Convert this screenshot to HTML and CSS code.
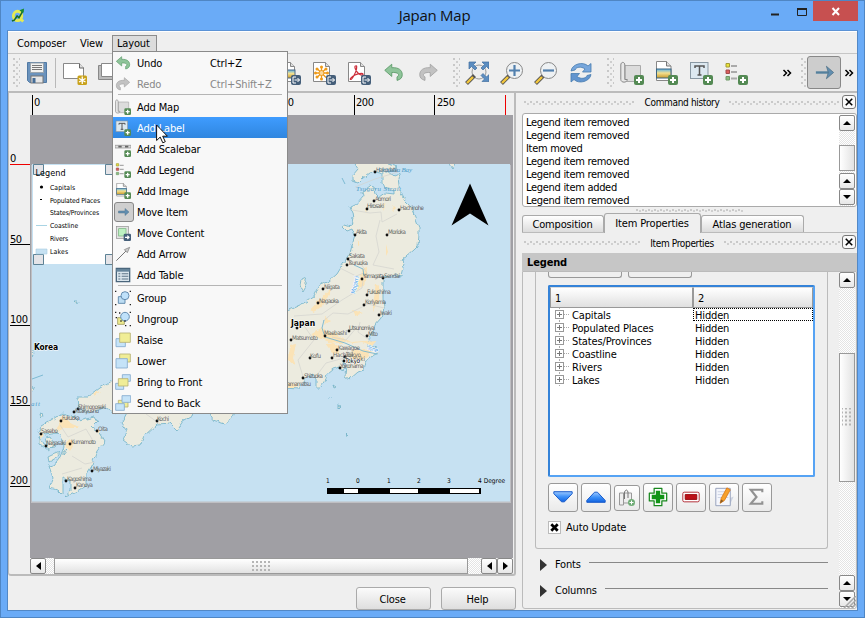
FILE: index.html
```html
<!DOCTYPE html>
<html lang="en">
<head>
<meta charset="utf-8">
<title>Japan Map</title>
<link rel="stylesheet" href="styles.css">
</head>
<body>
<svg class="defs" width="0" height="0">
<defs>
<filter id="rough" x="-5%" y="-5%" width="110%" height="110%"><feTurbulence type="fractalNoise" baseFrequency=".16" numOctaves="2" seed="4"/><feDisplacementMap in="SourceGraphic" scale="5" xChannelSelector="R" yChannelSelector="G"/></filter>
<linearGradient id="blue" x1="0" y1="0" x2="0" y2="1"><stop offset="0" stop-color="#9cc8ff"/><stop offset=".5" stop-color="#3c90f8"/><stop offset="1" stop-color="#1263e0"/></linearGradient>
<linearGradient id="sand" x1="0" y1="0" x2="0" y2="1"><stop offset="0" stop-color="#5cb4ea"/><stop offset=".45" stop-color="#f4e08e"/><stop offset="1" stop-color="#c79a2c"/></linearGradient>
<g id="plus"><rect x="14" y="14" width="10" height="10" rx="2" fill="#548a54"/><path d="M19 16v6M16 19h6" stroke="#fff" stroke-width="2"/></g>
<g id="out"><rect x="14" y="14" width="10" height="10" rx="2" fill="#455f7a"/><path d="M19 16h-3v6h3M17.500 19h5M20.500 17l2 2-2 2" stroke="#fff" fill="none"/></g>
<symbol id="save" viewBox="0 0 24 24"><path d="M2.500 1.500h19v20h-17l-2-2z" fill="#6b93bd" stroke="#527aa4"/><rect x="5.500" y="2" width="13" height="9.500" fill="#f2f2f0" stroke="#9aa5ae"/><path d="M7 4.500h10M7 6.500h10M7 8.500h10" stroke="#777"/><rect x="6" y="15" width="12" height="7" fill="#e6e6e6" stroke="#777"/><rect x="7.500" y="17" width="3" height="5" fill="#456c95"/></symbol>
<symbol id="new" viewBox="0 0 24 24"><path d="M.5 2.500h16l4 4.500v10.500h-20z" fill="#fff" stroke="#888"/><path d="M16.500 2.500v4.500h4.500" fill="#ddd" stroke="#666"/><rect x="14.500" y="14.500" width="9.500" height="9.500" rx="1.500" fill="#c9a21a"/><path d="M19.250 15.500v7.500M16 17.500l6.500 3.500M22.500 17.500l-6.500 3.500" stroke="#fff" stroke-width="1.300"/></symbol>
<symbol id="dup" viewBox="0 0 24 24"><path d="M.5 4.500h18v14h-18z" fill="#bbb" stroke="#888"/><path d="M3.500 2.500h18v13h-18z" fill="#fff" stroke="#888"/></symbol>
<symbol id="expimg" viewBox="0 0 24 24"><path d="M1.500 1.500h12l4 4v15h-16z" fill="#fff" stroke="#888"/><path d="M13.500 1.500v4h4" fill="#ddd" stroke="#888"/><rect x="4" y="9" width="14" height="8" fill="url(#sand)" stroke="#4b6784"/><use href="#out"/></symbol>
<symbol id="expsvg" viewBox="0 0 24 24"><path d="M1.500 1.500h12l4 4v15h-16z" fill="#fff" stroke="#888"/><path d="M13.500 1.500v4h4" fill="#ddd" stroke="#888"/><path d="M9.500 5.500v13M3 12h13M5 7.500l9 9M14 7.500l-9 9" stroke="#ee9a19" stroke-width="1.300"/><circle cx="9.500" cy="12" r="2.500" fill="#fbd79b" stroke="#ee9a19"/><g fill="#ee9a19"><circle cx="9.500" cy="6" r="1.500"/><circle cx="9.500" cy="18" r="1.500"/><circle cx="3.500" cy="12" r="1.500"/><circle cx="15.500" cy="12" r="1.500"/><circle cx="5" cy="8" r="1.500"/><circle cx="14" cy="8" r="1.500"/><circle cx="5" cy="16" r="1.500"/></g><use href="#out"/></symbol>
<symbol id="exppdf" viewBox="0 0 24 24"><path d="M1.500 1.500h12l4 4v15h-16z" fill="#fff" stroke="#888"/><path d="M13.500 1.500v4h4" fill="#ddd" stroke="#888"/><path d="M8.500 5c-1.500 0 0 5 3 7.500s5 1.500 4.500.5-5-.5-8 1-5.500 4-4.500 4.500S9 12 9.500 8 9.500 5 8.500 5z" fill="none" stroke="#cc2e3a" stroke-width="1.200"/><use href="#out"/></symbol>
<symbol id="undo" viewBox="0 0 24 24"><path d="M2 9.500l8-7v4c8-.5 12 3 12 8 0 3.500-2 5.500-6 6.500v-4c3-1.500 3-5.500-6-5v4.500z" fill="#8fc49a" stroke="#5b9a68"/></symbol>
<symbol id="redo" viewBox="0 0 24 24"><path d="M22 9.500l-8-7v4C6 6 2 9.500 2 14.500c0 3.500 2 5.500 6 6.500v-4c-3-1.500-3-5.500 6-5v4.500z" fill="#c2c2c2" stroke="#a4a4a4"/></symbol>
<g id="lens"><path d="M1.500 22.500l8-8" stroke="#555" stroke-width="4"/><path d="M2 22l6-6" stroke="#f3c73c" stroke-width="2.400"/></g>
<symbol id="full" viewBox="0 0 24 24"><circle cx="14" cy="11" r="7" fill="#eee" stroke="#999"/><use href="#lens"/><g fill="#5c8dc0" stroke="#416f9f" stroke-width=".7"><path d="M4 1h7L8.500 3.500 12 7 10 9 6.500 5.500 4 8z"/><path d="M24 1h-7l2.500 2.500L16 7l2 2 3.500-3.500L24 8z"/><path d="M24 20.500h-7l2.500-2.500-3.500-3.500 2-2 3.500 3.500 2.500-2.500z"/></g></symbol>
<symbol id="zin" viewBox="0 0 24 24"><use href="#lens"/><circle cx="14.500" cy="9.500" r="8" fill="#eef1f3" stroke="#888"/><path d="M14.500 4v11M9 9.500h11" stroke="#5280ae" stroke-width="2.200"/></symbol>
<symbol id="zout" viewBox="0 0 24 24"><use href="#lens"/><circle cx="14.500" cy="9.500" r="8" fill="#eef1f3" stroke="#888"/><path d="M9 9.500h11" stroke="#5280ae" stroke-width="2.200"/></symbol>
<symbol id="refresh" viewBox="0 0 24 24"><path d="M2 10C3 3 14 0 19 5l3-2.500V11h-8.500l2.500-3C12 5 7 6 6 9z" fill="#78a7dc" stroke="#477caf" stroke-width=".8"/><path d="M22 13.500c-1 7-12 10-17 5L2 21v-8.500h8.500L8 15.500c4 3 9 2 10-1z" fill="#6295cf" stroke="#477caf" stroke-width=".8"/></symbol>
<symbol id="map" viewBox="0 0 24 24"><path d="M5 4.500h15.500v16H5z" fill="#dcdcdc" stroke="#aaa"/><path d="M.8 4c0-3.500 4-3.500 4 0v14.500h2.500c0 3.500-6.500 3.500-6.500 0z" fill="#e8e8e8" stroke="#888"/><use href="#plus"/></symbol>
<symbol id="image" viewBox="0 0 24 24"><path d="M2.500.5h10l4.500 4.500v14.500h-14.500z" fill="#fff" stroke="#888"/><path d="M12.500.5v4.500h4.500" fill="#ddd" stroke="#777"/><rect x="2.500" y="8" width="14.500" height="9" fill="url(#sand)" stroke="#3c6480"/><use href="#plus"/></symbol>
<symbol id="label" viewBox="0 0 24 24"><rect x="1.500" y="1.500" width="17.500" height="16" fill="#dce8f0" stroke="#8998a3"/><path d="M6 7V5h9v2M10.500 5v9M8.500 14h4" fill="none" stroke="#555" stroke-width="1.500"/><use href="#plus"/></symbol>
<symbol id="legend" viewBox="0 0 24 24"><path d="M2 2.500h3.500V6H2z" fill="#e8e33a" stroke="#a49a34"/><path d="M2 9h3.500v3.500H2z" fill="#dc5d5d" stroke="#a24c4c"/><path d="M2 15.500h3.500V19H2z" fill="#8bbd80" stroke="#709a69"/><path d="M7 5h6M7 11h6M7 17.500h6" stroke="#aaa" stroke-width="2"/><use href="#plus"/></symbol>
<symbol id="scalebar" viewBox="0 0 24 24"><path d="M0 6.500h24v4H0z" fill="#ddd" stroke="#888"/><path d="M5 8.500h5M15 8.500h5" stroke="#666" stroke-width="2.500"/><use href="#plus"/></symbol>
<symbol id="move" viewBox="0 0 24 24"><path d="M1 10h13V5l8 7-8 7v-5H1z" fill="#628eb0" stroke="#54768d"/></symbol>
<symbol id="content" viewBox="0 0 24 24"><rect x="2" y="2" width="18" height="18" fill="#e3e3e3" stroke="#8f8f8f"/><rect x="5.500" y="5.500" width="11" height="11" fill="#bdf1c2" stroke="#72b179"/><rect x="13" y="13" width="11" height="11" rx="2" fill="#455f7a"/><path d="M15 18.500h6M18.500 16l2.500 2.500-2.500 2.500" fill="none" stroke="#fff" stroke-width="1.800"/></symbol>
<symbol id="arrow" viewBox="0 0 24 24"><path d="M2 22L18 6" stroke="#777" stroke-width="1.500"/><path d="M22 2l-3.500 8-4.500-4.500z" fill="#ccc" stroke="#777"/></symbol>
<symbol id="table" viewBox="0 0 24 24"><path d="M2 2h20v20H2z" fill="#dbe6ed" stroke="#4a667c" stroke-width="2"/><path d="M2 5h20" stroke="#66859b" stroke-width="4"/><path d="M5 10h3M10 10h10M5 14h3M10 14h10M5 18h3M10 18h10" stroke="#5d7487" stroke-width="1.600"/></symbol>
<g id="corners" fill="#222"><path d="M0 1h2v2H0zM22 1h2v2h-2zM0 21h2v2H0zM22 21h2v2h-2z"/></g>
<symbol id="group" viewBox="0 0 24 24"><path d="M5 10h10v10H5z" fill="#bdddf3" stroke="#5e87aa" stroke-width="1.400"/><circle cx="15" cy="8.500" r="6" fill="#bfe1fa" stroke="#5e87aa" stroke-width="1.400"/><use href="#corners"/></symbol>
<symbol id="ungroup" viewBox="0 0 24 24"><path d="M4 10h10v10H4z" fill="#eeeb8d" stroke="#aaa56b" stroke-width="1.400"/><circle cx="15" cy="8.500" r="6.500" fill="#bfe1fa" stroke="#5e87aa" stroke-width="1.400"/><use href="#corners"/><path d="M8 14h2v2H8zM14 14h2v2h-2zM6 2h2v2H6zM1 9h2v2H1zM15 21h2v2h-2z" fill="#222"/></symbol>
<symbol id="raise" viewBox="0 0 24 24"><path d="M1.500 10h14v12h-14z" fill="#c5e3f8" stroke="#87add0" stroke-width="1.300"/><path d="M7 1.500h16v14H7z" fill="#f0ed96" stroke="#b8b476" stroke-width="1.300"/></symbol>
<symbol id="lower" viewBox="0 0 24 24"><path d="M7 1.500h16v12H7z" fill="#f0ed96" stroke="#b8b476" stroke-width="1.300"/><path d="M1.500 8.500h17v14h-17z" fill="#c5e3f8" stroke="#87add0" stroke-width="1.300"/></symbol>
<symbol id="front" viewBox="0 0 24 24"><path d="M11 1h12v10H11zM1 14h12v9H1z" fill="#c5e3f8" stroke="#87add0" stroke-width="1.300"/><path d="M5 7h14.500v11H5z" fill="#f0ed96" stroke="#b8b476" stroke-width="1.300"/></symbol>
<symbol id="back" viewBox="0 0 24 24"><path d="M5 8h14.500v10H5z" fill="#f0ed96" stroke="#b8b476" stroke-width="1.300"/><path d="M10.500 1h13v10h-13zM1 13h13v10H1z" fill="#c5e3f8" stroke="#87add0" stroke-width="1.300"/></symbol>
</defs>
</svg>

<div class="window">
  <header class="titlebar">
    <svg class="logo" viewBox="0 0 16 16"><ellipse cx="7" cy="9" rx="4.500" ry="5" fill="none" stroke="#e4ea54" stroke-width="3"/><path d="M8 10l5 5" stroke="#e4ea54" stroke-width="3"/><path d="M1 14.500l2.500-1 3-4.500 2 2L13 3" fill="none" stroke="#186b2a" stroke-width="1.700"/><path d="M9 3l5-2-1 5z" fill="#168a30"/></svg>
    <h1>Japan Map</h1>
    <div class="controls"><svg viewBox="0 0 45 20"><path d="M10 13.500h8" stroke="#222" stroke-width="2"/><path d="M36.500 7.500h9v7h-9z" fill="none" stroke="#222"/><path d="M36 8h10" stroke="#222" stroke-width="2"/></svg><span class="shut"><svg viewBox="0 0 45 20"><path d="M19.500 7l6.500 7M26 7l-6.500 7" stroke="#fff" stroke-width="2"/></svg></span></div>
  </header>

  <div class="client">
    <nav class="menubar"><span>Composer</span><span>View</span><span class="open">Layout</span></nav>
    <div class="toolbar">
      <i class="grip g1"></i>
      <b><svg><use href="#save"/></svg></b><i class="tsep"></i>
      <b><svg><use href="#new"/></svg></b><b><svg><use href="#dup"/></svg></b>
      <i class="covered"></i>
      <b><svg><use href="#expimg"/></svg></b><b><svg><use href="#expsvg"/></svg></b><b><svg><use href="#exppdf"/></svg></b><b><svg class="mid"><use href="#undo"/></svg></b><b><svg class="mid"><use href="#redo"/></svg></b>
      <i class="grip g2"></i>
      <b><svg><use href="#full"/></svg></b><b><svg><use href="#zin"/></svg></b><b><svg><use href="#zout"/></svg></b><b><svg><use href="#refresh"/></svg></b>
      <i class="grip g3"></i>
      <b><svg><use href="#map"/></svg></b><b><svg><use href="#image"/></svg></b><b><svg><use href="#label"/></svg></b><b><svg><use href="#legend"/></svg></b>
      <svg class="more m1" viewBox="0 0 10 8"><path d="M1.500 1l3 3-3 3M5.500 1l3 3-3 3" fill="none" stroke="#000" stroke-width="1.500"/></svg>
      <i class="grip g4"></i>
      <span class="pressed"><svg viewBox="0 0 24 24"><path d="M3 12h16" stroke="#54809d" stroke-width="2.500"/><path d="M14 5.500l7.500 6.500-7.500 6.500 2-6.500z" fill="#628eb0" stroke="#4f7085" stroke-width=".8"/></svg></span>
      <svg class="more" viewBox="0 0 10 8"><path d="M1.500 1l3 3-3 3M5.500 1l3 3-3 3" fill="none" stroke="#000" stroke-width="1.500"/></svg>
    </div>

    <div class="work">
      <main class="left">
        <div class="view">
          <svg class="canvas" viewBox="10 95 503 463">
            <path d="M30 115h483v443H30z" fill="#a09fa4"/>
            <g class="ruler"><path d="M32.500 95v20M113.500 95v20M193.500 95v20M274.500 95v20M354.500 95v20M434.500 95v20M10 244.500h20M10 325.500h20M10 405.500h20M10 486.500h20" stroke="#000"/><path d="M505.500 95v20M10 164.500h20" stroke="#e00"/>
            <text x="34" y="106">0</text><text x="276" y="106" textLength="18">150</text><text x="356" y="106" textLength="18">200</text><text x="437" y="106" textLength="18">250</text><text x="10" y="162">0</text><text x="10" y="243" textLength="12">50</text><text x="10" y="323" textLength="18">100</text><text x="10" y="404" textLength="18">150</text><text x="10" y="484" textLength="18">200</text></g>
            <path d="M31 165h480v338H31z" fill="#bfbfc3"/>
            <path d="M32 164h478v337.500H32z" fill="#c6e1f2"/>
            <svg x="32" y="164" width="478" height="337" viewBox="32 164 478 337">
            <g class="land" filter="url(#rough)">
              <path d="M362 192l1 5-5 6-8 4 2 5 1 7-2 7-6-2-2 3 4 4 5-2 3 7-3 9-2 9-5 7-8 13-9 8-8 3-6 12-12 7-11 5-10 4L250 350 150 370 112 381 100 388 88 397l-11 0 1 11 12 5 13-6 10 6 170 -25 16 1 3-6 4-5 7-4 3 5 0 9 4 0 5-6 2-8 6-5 7-2 3 4 2-4-3-6 5 3-1 12 4 3 8-7 6-2 2-9 6-5 6-3-1-4-9-3 0-6 5-7 2-8 6-7 3-10-1-10 0-13 0-8 7-1 7-1 4 1 3-11-2-5 5-4 7-6 4-4 1-11 0-7-4-11-5-12-5-5-5-8-2-14 3-5-7 3-7-6-5 4 0 8 2 5 10 3 0 4-8-1-7 5-4-4-1-7-4-1z"/>
              <path d="M350 155l8 14-5 6 0 6 5 2 5-5 7-5 5-1 8 2 7-3 8-4-7-2-4-1-7-8z"/><path d="M446 160l6 8 4-7z"/>
              <path d="M62 413l-12 8-9 5-3 6 8 3 11-2 5 7 2 7-4 10-6 8-5 1 4 12-4 10 9 2 5 5 0-9 0-8 7 3 0 10-5 6 10-4 11-7 0-12 6-10 5-13 7-9-6-10-6-5 5-5-3-5-16 4-5-5-9-2z"/>
              <path d="M40 436l0 8 8 6 7-5-5-8-4 1 2 7-4-1zM52 455l8-3-4 6-7 4-1-5zM63 452l4-2-4 5z"/>
              <path d="M130 408l-8 15 5 7-4 10 8 6 9-1 4-9 13-12 13-1 7 7 6-9 9-5 3-8zM206 408l7 12 12 4 6-5 4-11zM40 414l3 1-2 3z"/>
              <path d="M333 385l3 2-2 1zM338 405l2 1-2 2zM346 434l2 2-1 1zM331 396l-1 2zM301 280l4-2 0 4 3 0-5 9-2-3-1-3z"/>
              <path d="M74 301l3 0-1 2zM28 345l6 8-2 4zM28 385l6 3-2 4z"/>
            </g>
            <g class="city" filter="url(#rough)"><path d="M377 340l-8 10-14-1-6 9 6 7 6-5 8-4 3-10-10-4-9 1-19-10-13-4-10 6 15 6 12 5 2 8-8-2-6-8zM363 268l3-1 0 12-5 9-4 2zM376 283l3 4 0 12-5 10-2 3zM328 290l3-1-9 19-8 4-4-2zM62 415l10 9 10 4-17 0-9 4zM70 439l4 4-4 8-6-7zM290 345l6-1-3 14 3 8-7-6zM285 384l12-1-1 5-11 0zM384 203l2 5-2 4zM392 205l4 4-3 3zM366 205l2 2-2 7zM357 240l2 3-2 4zM386 244l2 8-2 4zM96 429l4 1-1 4zM39 432l5 2-2 5zM353 310l10 3-8 3zM325 317l5 3-6 5zM92 394l8-3-5 6z"/></g>
            </svg>
            <g fill="none" stroke="#d2d2ce" stroke-width=".7"><path d="M352 210l18 3 11-1 1 10 15-8M380 220l-4 16 3 16-6 13 21 4M340 268l16 8 8-3-2 15-20 12-20 14-28 2M347 261l14 3 8 12M384 308l-16-4-20 10-15-1-10 8M376 330l-18-4-12 14-14-3M372 342l-14-10 2-10M300 320l14 20-16 20 6 20M350 345l-6 13-18 5-9 12M60 425l8 12 18-8 6 10M72 456l13 8 10-2M62 474l20-6M160 424l-14-10M355 187l20-8 23-7"/></g>
            <path d="M354 265l9 4 1 7M324 320l-2 8 3 9 20 6 18 8 14 3M345 184l-3-6M32 379l11-4" fill="none" stroke="#75b6cf" stroke-width=".9"/>
            <g fill="#111"><circle cx="375" cy="172" r="1.400"/><circle cx="374" cy="201" r="1.400"/><circle cx="367" cy="209" r="1.400"/><circle cx="399" cy="210" r="1.400"/><circle cx="355" cy="235" r="1.400"/><circle cx="387" cy="235" r="1.400"/><circle cx="348" cy="259" r="1.400"/><circle cx="347" cy="265" r="1.400"/><circle cx="362" cy="279" r="1.400"/><circle cx="383" cy="278" r="1.400"/><circle cx="367" cy="295" r="1.400"/><circle cx="364" cy="305" r="1.400"/><circle cx="323" cy="289" r="1.400"/><circle cx="318" cy="303" r="1.400"/><circle cx="379" cy="315" r="1.400"/><circle cx="349" cy="331" r="1.400"/><circle cx="325" cy="336" r="1.400"/><circle cx="367" cy="336" r="1.400"/><circle cx="291" cy="340" r="1.400"/><circle cx="297" cy="328" r="1.400"/><circle cx="337" cy="350" r="1.400"/><circle cx="310" cy="358" r="1.400"/><circle cx="332" cy="358" r="1.400"/><circle cx="345" cy="357" r="1.700"/><circle cx="344" cy="361" r="1.400"/><circle cx="340" cy="368" r="1.400"/><circle cx="303" cy="378" r="1.400"/><circle cx="78" cy="409" r="1.400"/><circle cx="74" cy="412" r="1.400"/><circle cx="61" cy="421" r="1.400"/><circle cx="41" cy="434" r="1.400"/><circle cx="46" cy="446" r="1.400"/><circle cx="70" cy="444" r="1.400"/><circle cx="97" cy="431" r="1.400"/><circle cx="92" cy="471" r="1.400"/><circle cx="66" cy="481" r="1.400"/><circle cx="75" cy="488" r="1.400"/><circle cx="157" cy="421" r="1.400"/></g>
            <g class="places"><text x="376" y="172" textLength="22">Hakodate</text><text x="375" y="201" textLength="16">Aomori</text><text x="367" y="208" textLength="17">Hirosaki</text><text x="400" y="210" textLength="24">Hachinohe</text><text x="356" y="234" textLength="11">Akita</text><text x="388" y="234" textLength="18">Morioka</text><text x="349" y="258" textLength="16">Sakata</text><text x="348" y="265" textLength="20">Tsuruoka</text><text x="363" y="278" textLength="21">Yamagata</text><text x="384" y="278" textLength="16">Sendai</text><text x="367" y="294" textLength="24">Fukushima</text><text x="365" y="304" textLength="21">Koriyama</text><text x="324" y="289" textLength="16">Niigata</text><text x="319" y="303" textLength="20">Nagaoka</text><text x="380" y="315" textLength="12">Iwaki</text><text x="349" y="330" textLength="26">Utsunomiya</text><text x="324" y="335" textLength="23">Maebashi</text><text x="368" y="336" textLength="10">Mito</text><text x="292" y="340" textLength="26">Matsumoto</text><text x="338" y="350" textLength="22">Kawagoe</text><text x="310" y="358" textLength="11">Kofu</text><text x="333" y="357" textLength="20">Hachioji</text><text x="346" y="357" textLength="15">Tokyo</text><text x="353" y="361" textLength="12">Suki</text><text x="340" y="368" textLength="24">Yokohama</text><text x="304" y="378" textLength="19">Shizuoka</text><text x="284" y="386" textLength="27">Hamamatsu</text><text x="78" y="409" textLength="28">Shimonoseki</text><text x="75" y="413" textLength="24">Kitakyushu</text><text x="62" y="420" textLength="18">Fukuoka</text><text x="41" y="433" textLength="17">Sasebo</text><text x="46" y="445" textLength="20">Nagasaki</text><text x="71" y="444" textLength="25">Kumamoto</text><text x="98" y="431" textLength="10">Oita</text><text x="93" y="471" textLength="18">Miyazaki</text><text x="67" y="481" textLength="25">Kagoshima</text><text x="76" y="487" textLength="17">Kanoya</text><text x="157" y="421" textLength="12">Kochi</text></g>
            <g class="water"><text x="378" y="172" textLength="34">Uchiura Bay</text><text x="356" y="191" textLength="45">Tsugaru Strait</text><text x="31" y="406" textLength="9">ait</text><text class="river" x="355" y="294" transform="rotate(-77 355 294)" textLength="18">Mogami</text><text class="river" x="367" y="349" transform="rotate(20 367 349)" textLength="11">Tone</text></g>
            <g class="country"><text x="291" y="326" textLength="24">Japan</text><text x="34" y="350" textLength="24">Korea</text></g><text class="tokyo" x="345" y="363" textLength="15">Tokyo</text>
            <path d="M470 183.500l18.500 42-18.500-12-18.500 12z"/>
            <g class="scale"><path d="M327 488h154v6H327z"/><path d="M344 489h14v4h-14zM390 489h28v4h-28zM450 489h29v4h-29z" fill="#fff"/><text x="326" y="483">1</text><text x="356" y="483">0</text><text x="387" y="483">1</text><text x="417" y="483">2</text><text x="447" y="483">3</text><text x="478" y="483" textLength="27">4 Degree</text></g>
            <path d="M33 165h86v99H33z" fill="#fff"/>
            <g fill="#e4e4e8" stroke="#5d8296"><path d="M33.500 164.500h10v10h-10zM105.500 164.500h10v10h-10zM33.500 254.500h10v10h-10zM105.500 254.500h10v10h-10z"/></g>
            <g class="maplegend"><text class="head" x="35.500" y="176" textLength="30">Legend</text><text x="50" y="190" textLength="25">Capitals</text><text x="50" y="203" textLength="50">Populated Places</text><text x="50" y="215" textLength="49">States/Provinces</text><text x="50" y="228" textLength="28">Coastline</text><text x="50" y="241" textLength="18">Rivers</text><text x="50" y="254" textLength="18">Lakes</text><circle cx="41.500" cy="187" r="1.600"/><path d="M40 199h2v1h-2z"/><path d="M36 225.500h11" stroke="#a9d4e4"/><path d="M36 249h11v5H36z" fill="#c6e1f2" stroke="#a9cde0" stroke-width=".6"/></g>
          </svg>
          <div class="hscroll"><span class="sb"><i class="al"></i></span><div class="hthumb"><i></i></div><span class="sb end"><i class="al"></i></span><span class="sb"><i class="ar"></i></span></div>
        </div>
        <footer><button>Close</button><button>Help</button></footer>
      </main>

      <aside class="right">
        <div class="docktitle"><i></i><span>Command history</span><i></i><em><svg viewBox="0 0 13 13"><path d="M3 3l7 7M10 3l-7 7" stroke="#000" stroke-width="1.700"/></svg></em></div>
        <div class="history">
          <ul><li>Legend item removed</li><li>Legend item removed</li><li>Item moved</li><li>Legend item removed</li><li>Legend item removed</li><li>Legend item added</li><li>Legend item removed</li></ul>
          <div class="vscroll"><span class="sb"><i class="au"></i></span><div class="vthumb h1"></div><span class="sb"><i class="au"></i></span><span class="sb"><i class="ad"></i></span></div>
        </div>
        <div class="split"></div>
        <div class="tabs"><span>Composition</span><span class="on">Item Properties</span><span>Atlas generation</span></div>
        <div class="docktitle second"><i></i><span>Item Properties</span><i></i><em><svg viewBox="0 0 13 13"><path d="M3 3l7 7M10 3l-7 7" stroke="#000" stroke-width="1.700"/></svg></em></div>
        <h2>Legend</h2>
        <div class="props">
          <div class="form">
            <section>
              <div class="cut"><i></i><i></i></div>
              <div class="tree">
                <div class="thead"><span>1</span><span>2</span></div>
                <div class="row"><span>Capitals</span><span class="focus">Hidden</span></div>
                <div class="row"><span>Populated Places</span><span>Hidden</span></div>
                <div class="row"><span>States/Provinces</span><span>Hidden</span></div>
                <div class="row"><span>Coastline</span><span>Hidden</span></div>
                <div class="row"><span>Rivers</span><span>Hidden</span></div>
                <div class="row"><span>Lakes</span><span>Hidden</span></div>
              </div>
              <div class="actions">
                <span><svg viewBox="0 0 28 28"><path d="M4.500 8h19v2l-8 8.500h-3L4.500 10z" fill="url(#blue)" stroke="#1457c8"/></svg></span>
                <span><svg viewBox="0 0 28 28"><path d="M4.500 19h19v-2l-8-8.500h-3L4.500 17z" fill="url(#blue)" stroke="#1457c8"/></svg></span>
                <span class="small"><svg viewBox="0 0 24 24"><path d="M4.500 7v12h4V7zM8.500 7h8v10h-8z" fill="#eee" stroke="#999"/><path d="M9.500 13V6q2-4 3.500 0v6" fill="none" stroke="#777"/><circle cx="16.500" cy="16.500" r="3.500" fill="#6fac76"/><path d="M16.500 14.500v4M14.500 16.500h4" stroke="#fff"/></svg></span>
                <span><svg viewBox="0 0 28 28"><path d="M10 4.500h8v5h5v8h-5v5h-8v-5H5v-8h5z" fill="#fff" stroke="#18881d" stroke-width="1.300" stroke-linejoin="round"/><path d="M14 7v13M7.500 13.500h13" stroke="#129417" stroke-width="4.500"/></svg></span>
                <span><svg viewBox="0 0 28 28"><rect x="5.500" y="8.500" width="17" height="10" rx="1.500" fill="#fff" stroke="#b12b34"/><path d="M8 11h12v5H8z" fill="#bd1119" stroke="#98080d"/></svg></span>
                <span><svg viewBox="0 0 28 28"><path d="M17 16l7-3-4 9h-6z" fill="#cdd3df"/><path d="M5.500 4.500h15v18h-15z" fill="#f4f6fc" stroke="#96a0bb"/><path d="M7.500 8h11M7.500 11h11M7.500 14h11" stroke="#ccd3e4"/><path d="M10 20l1-5 6-11 3.500 2-6 11z" fill="#f6a12c" stroke="#d87310" stroke-width=".8"/><path d="M10 20l1-4 2.500 1.500z" fill="#865d27"/></svg></span>
                <span><svg viewBox="0 0 28 28"><path d="M19.500 8.500V6h-12l6 7.500-6 7h12V18" fill="none" stroke="#929292" stroke-width="2.200"/></svg></span>
              </div>
              <label class="check"><i><svg viewBox="0 0 12 12"><path d="M2.500 2.500l7 7M9.500 2.500l-7 7" stroke="#000" stroke-width="3"/></svg></i>Auto Update</label>
            </section>
            <div class="fold">Fonts</div>
            <div class="fold two">Columns</div>
          </div>
          <div class="vscroll big"><span class="sb"><i class="au"></i></span><div class="vthumb h2"></div><span class="sb push"><i class="au"></i></span><span class="sb"><i class="ad"></i></span><svg class="resize" viewBox="0 0 12 12"><path d="M0 12L12 0M4 12l8-8M8 12l4-4" stroke="#aaa" stroke-width="1.500"/></svg></div>
        </div>
      </aside>
    </div>
  </div>

  <div class="menu">
    <div class="item"><svg><use href="#undo"/></svg><span>Undo</span><kbd>Ctrl+Z</kbd></div>
    <div class="item off"><svg><use href="#redo"/></svg><span>Redo</span><kbd>Ctrl+Shift+Z</kbd></div>
    <hr>
    <div class="item"><svg><use href="#map"/></svg><span>Add Map</span></div>
    <div class="item hot"><svg><use href="#label"/></svg><span>Add Label</span></div>
    <div class="item"><svg><use href="#scalebar"/></svg><span>Add Scalebar</span></div>
    <div class="item"><svg><use href="#legend"/></svg><span>Add Legend</span></div>
    <div class="item"><svg><use href="#image"/></svg><span>Add Image</span></div>
    <div class="item checked"><svg><use href="#move"/></svg><span>Move Item</span></div>
    <div class="item"><svg><use href="#content"/></svg><span>Move Content</span></div>
    <div class="item"><svg><use href="#arrow"/></svg><span>Add Arrow</span></div>
    <div class="item"><svg><use href="#table"/></svg><span>Add Table</span></div>
    <hr>
    <div class="item"><svg><use href="#group"/></svg><span>Group</span></div>
    <div class="item"><svg><use href="#ungroup"/></svg><span>Ungroup</span></div>
    <div class="item"><svg><use href="#raise"/></svg><span>Raise</span></div>
    <div class="item"><svg><use href="#lower"/></svg><span>Lower</span></div>
    <div class="item"><svg><use href="#front"/></svg><span>Bring to Front</span></div>
    <div class="item"><svg><use href="#back"/></svg><span>Send to Back</span></div>
  </div>
  <svg class="cursor" viewBox="0 0 12 20"><path d="M.6 1v15.500l3.600-3.400 2.600 5.700 2.500-1.100-2.600-5.500h4.700z" fill="#fff" stroke="#111"/></svg>
</div>
</body>
</html>
```
FILE: styles.css
```css
* { box-sizing: border-box; }
body { margin: 0; font: 11px/13px "DejaVu Sans Condensed", "DejaVu Sans", sans-serif; font-stretch: condensed; color: #000; overflow: hidden; letter-spacing: -0.15px; }
.defs { position: absolute; }
i, em { font-style: normal; display: block; }
h1, h2, ul { margin: 0; padding: 0; font: inherit; list-style: none; }
.window { position: relative; width: 865px; height: 618px; background: #6aabf7; border: 1px solid #4f86c4; padding: 0 6px 6px; }
.titlebar { height: 29px; display: flex; align-items: flex-start; margin-right: -6px; }
.logo { width: 15px; height: 16px; margin: 6px 0 0 4px; }
.titlebar h1 { flex: 1; font: 15px/28px "Open Sans", "Noto Sans", sans-serif; text-align: center; padding-left: 82px; letter-spacing: -0.25px; color: #111; }
.controls { display: flex; padding-right: 6px; }
.controls svg { width: 45px; height: 20px; display: block; overflow: visible; }
.controls > svg { margin-right: 7px; }
.shut { background: #c75050; width: 45px; height: 20px; }
.client { height: 581px; border: 1px solid #5288c6; background: #efefef; border-top-color: #5b93d6; }
.menubar { height: 23px; display: flex; border-bottom: 1px solid #c6c6c6; border-top: 1px solid #fff; padding: 3px 0 0 4px; }
.menubar span { height: 18px; line-height: 17px; padding: 0 5px; margin-right: 4px; }
.menubar .open { border: 1px solid #8c8c8c; background: #dcdcdc; line-height: 15px; padding: 0 4px; width: 45px; }
.toolbar { height: 39px; display: flex; align-items: center; border-bottom: 2px solid #bbb; padding-left: 5px; }
.toolbar b { flex: none; width: 34.7px; height: 34px; display: flex; align-items: center; justify-content: center; }
.toolbar b svg { width: 24px; height: 24px; }
.toolbar b svg.mid { width: 21px; height: 21px; }
.grip { flex: none; width: 7px; height: 29px; background: radial-gradient(circle at 1px 1px, #c8c8c8 1px, transparent 1.300px) 0 0 / 6px 6px, radial-gradient(circle at 4px 4px, #cecece 1px, transparent 1.300px) 0 0 / 6px 6px; }
.tsep { width: 1px; height: 30px; background: #b9b9b9; margin-right: 2px; }
.covered { width: 145px; flex: none; }
.g2 { margin-left: 7px; margin-right: 0; }
.g3 { margin-left: 9px; margin-right: 0; }
.more { width: 10px; height: 8px; flex: none; }
.m1 { margin-left: 29px; }
.g4 { margin-left: 9px; margin-right: -1px; }
.pressed { flex: none; width: 34px; height: 33px; border: 1px solid #888; border-radius: 3px; background: #cdcdcd; margin-right: 3px; display: grid; place-items: center; }
.pressed svg { width: 23px; height: 23px; }
.work { height: 517px; display: flex; }
.left { width: 514px; display: flex; flex-direction: column; }
.view { width: 508px; height: 483px; border: 1px solid #bbb; border-top: 0; border-right: 2px solid #bbb; border-bottom: 2px solid #bbb; border-radius: 0 0 3px 3px; padding: 2px 1px 0; }
.canvas { display: block; width: 503px; height: 463px; }
.hscroll, .vscroll { background: repeating-conic-gradient(#e4e4e4 0 25%, #fff 0 50%) 0 0 / 2px 2px; }
.hscroll { display: flex; height: 16px; margin-left: 20px; }
.sb { flex: none; width: 16px; height: 16px; border: 1px solid #888; border-radius: 2px; background: linear-gradient(#fff, #e7e7e7); display: grid; place-items: center; }
.al, .ar { border: 4px solid transparent; width: 0; height: 0; }
.al { border-right: 5px solid #000; border-left: 0; }
.ar { border-left: 5px solid #000; border-right: 0; }
.au, .ad { border: 4px solid transparent; width: 0; height: 0; }
.au { border-bottom: 4px solid #000; border-top: 0; }
.ad { border-top: 4px solid #000; border-bottom: 0; }
.hthumb { width: 415px; margin-left: 8px; border: 1px solid #999; background: linear-gradient(#fff, #e2e2e2); display: grid; place-items: center; }
.hthumb i { width: 19px; height: 11px; background: radial-gradient(circle at 1px 1px, #b5b5b5 1px, transparent 1.300px) 0 0 / 4px 4px; }
.hscroll .end { margin-left: 13px; }
footer { display: flex; gap: 10px; justify-content: flex-end; padding: 11px 6px 0 0; }
button { width: 75px; height: 23px; border: 1px solid #aaa; border-radius: 3px; background: linear-gradient(#fbfbfb, #dedede); font: inherit; letter-spacing: inherit; color: #000; padding: 1px 2px 0 0; }
.right { width: 335px; display: flex; flex-direction: column; }
.docktitle { height: 20px; display: flex; align-items: center; gap: 10px; padding: 0 1px 0 2px; font-size: 10px; letter-spacing: -0.35px; }
.docktitle span { margin-top: -2px; }
.second span { margin-top: 0; }
.docktitle i { flex: 1; height: 5px; background: radial-gradient(circle at 1px 1px, #c9c9c9 1px, transparent 1.300px) 0 0 / 6px 5px, radial-gradient(circle at 4px 3px, #d0d0d0 1px, transparent 1.300px) 0 0 / 6px 5px; }
.docktitle em { width: 14px; height: 14px; border: 1px solid #777; border-radius: 3px; background: #fafafa; margin: -2px 0 0 -8px; }
.docktitle em svg { display: block; width: 12px; height: 12px; }
.history { height: 94px; border: 1px solid #aaa; border-radius: 3px; background: #fff; display: flex; justify-content: space-between; overflow: hidden; padding: 1px 1px 0 3px; letter-spacing: -0.3px; }
.history ul { padding-top: 1px; height: 92px; }
.vscroll { width: 16px; display: flex; flex-direction: column; }
.vthumb { border: 1px solid #999; background: linear-gradient(90deg, #fff, #e2e2e2); }
.h1 { height: 26px; margin: 14px 0 2px; }
.split { height: 6px; flex: none; width: 108px; margin: 0 auto; background: radial-gradient(circle at 1px 3px, #c9c9c9 1px, transparent 1.300px) 0 0 / 6px 6px, radial-gradient(circle at 4px 4px, #d0d0d0 1px, transparent 1.300px) 0 0 / 6px 6px; }
.tabs { height: 20px; display: flex; align-items: flex-end; border-bottom: 1px solid #bbb; }
.tabs span { height: 17px; line-height: 18px; width: 82px; text-align: center; border: 1px solid #aaa; border-bottom: 0; background: linear-gradient(#fff, #dcdcdc); border-radius: 3px 3px 0 0; padding-right: 1px; }
.tabs span:last-child { width: 103px; }
.tabs .on { width: 97px; height: 20px; line-height: 20px; background: #efefef; margin-bottom: -1px; }
h2 { height: 18px; flex: none; background: #c6c6c6; font-weight: bold; line-height: 20px; padding-left: 5px; }
.props { height: 338px; border: 1px solid #bbb; border-radius: 0 0 3px 3px; display: flex; justify-content: space-between; padding-right: 1px; }
.form { width: 305px; padding-left: 12px; }
section { height: 277px; width: 293px; border: 1px solid #bbb; border-top: 0; border-radius: 0 0 3px 3px; padding: 0 12px; }
.cut { display: flex; gap: 6px; height: 6px; }
.cut i { width: 74px; border: 1px solid #999; border-top: 0; border-radius: 0 0 3px 3px; }
.cut i + i { width: 64px; }
.tree { margin-top: 7px; width: 267px; height: 192px; border: 2px solid #56a3f4; border-top-color: #3583d8; border-left-color: #3583d8; border-radius: 2px; background: #fff; letter-spacing: -0.15px; }
.thead { display: grid; grid-template: 21px / 143px 1fr; height: 21px; line-height: 21px; }
.thead span { height: 21px; border: 1px solid #999; border-top-color: #ddd; background: linear-gradient(#fff, #e0e0e0); padding-left: 4px; }
.row { display: grid; grid-template: 13px / 143px 1fr; height: 13px; line-height: 15px; }
.row span { height: 13px; }
.row span:first-child { padding-left: 22px; background: linear-gradient(#777, #777) 7px 6px / 5px 1px no-repeat, linear-gradient(#777, #777) 9px 4px / 1px 5px no-repeat, linear-gradient(#fff, #fff) 6px 3px / 7px 7px no-repeat, linear-gradient(#999, #999) 5px 2px / 9px 9px no-repeat, repeating-linear-gradient(90deg, #aaa 0 1px, #fff 1px 2px) 14px 6px / 6px 1px no-repeat, repeating-linear-gradient(#aaa 0 1px, #fff 1px 2px) 9px 0 / 1px 13px no-repeat; }
.row span + span { padding-left: 2px; }
.row .focus { outline: 1px dotted #000; outline-offset: -1px; }
.actions { display: flex; align-items: center; gap: 3px; margin-top: 6px; height: 29px; width: 240px; }
.actions span { flex: none; width: 30px; height: 29px; border: 1px solid #999; border-radius: 3px; background: linear-gradient(#fff, #eaeaea); }
.actions .small { width: 26px; height: 26px; }
.actions svg { display: block; width: 100%; height: 100%; }
.check { display: flex; align-items: center; gap: 5px; margin-top: 9px; letter-spacing: -0.15px; }
.check i { width: 13px; height: 13px; border: 1px solid #bbb; background: #fff; }
.check svg { display: block; width: 11px; height: 11px; }
.fold { display: flex; align-items: center; gap: 8px; height: 13px; margin-top: 9px; width: 293px; padding-left: 5px; letter-spacing: -0.2px; }
.fold.two { margin-top: 13px; }
.fold::before { content: ""; border: 6px solid transparent; border-left: 7px solid #333; border-right: 0; }
.fold::after { content: ""; flex: 1; height: 1px; background: #888; margin-top: -5px; }
.big { position: relative; padding-bottom: 1px; }
.h2 { height: 129px; margin-top: 65px; background: radial-gradient(circle at 1px 1px, #b5b5b5 1px, transparent 1.300px) center / 4px 4px content-box, linear-gradient(90deg, #fff, #e2e2e2); padding: 54px 2px; background-repeat: repeat, no-repeat; }
.push { margin-top: auto; }
.resize { position: absolute; right: -1px; bottom: 0; width: 12px; height: 12px; }
.menu { position: absolute; left: 111px; top: 50px; width: 176px; height: 363px; border: 1px solid #8a8a8a; background: #f8f8f8; }
.item { height: 21px; display: flex; align-items: center; padding-left: 2px; }
.item svg { width: 16px; height: 16px; flex: none; }
.item span { margin-left: 6px; width: 73px; white-space: nowrap; padding-top: 2px; }
.item kbd { font: inherit; padding-top: 2px; }
.off { color: #888; }
.hot { background: linear-gradient(#3f9cff, #2f86df); color: #fff; }
.checked svg { width: 20px; height: 20px; margin: 0 -3px 0 -1px; padding: 3px; border: 1px solid #888; border-radius: 3px; background: #cfcfcf; }
hr { margin: 0 5px 1px; border: 0; height: 1px; background: #b5b5b5; }
.cursor { position: absolute; left: 155px; top: 123px; width: 12px; height: 20px; }
.ruler text { font-size: 11px; letter-spacing: 0; }
.land path { fill: #ecebdf; stroke: #6fb1c8; stroke-width: .8; }
.city path { fill: #fbe3b6; }
.places text { font: 6.200px "DejaVu Sans Condensed", sans-serif; fill: #666; letter-spacing: 0; }
.water text { font: italic 7px "Liberation Serif", serif; fill: #4f9cc8; letter-spacing: 0; }
.water .river { font: 6px "DejaVu Sans Condensed", sans-serif; fill: #3d9be8; paint-order: stroke; stroke: #fff; stroke-width: 1px; }
.country text { font: bold 8.500px "DejaVu Sans Condensed", sans-serif; paint-order: stroke; stroke: #fff; stroke-width: 1px; }
.tokyo { font: 6.500px "DejaVu Sans Condensed", sans-serif; paint-order: stroke; stroke: #fff; stroke-width: 1px; }
.scale text { font: 6.500px "DejaVu Sans Condensed", sans-serif; }
.maplegend text { font: 6.800px "DejaVu Sans Condensed", sans-serif; }
.maplegend text.head { font-size: 9px; }
```
